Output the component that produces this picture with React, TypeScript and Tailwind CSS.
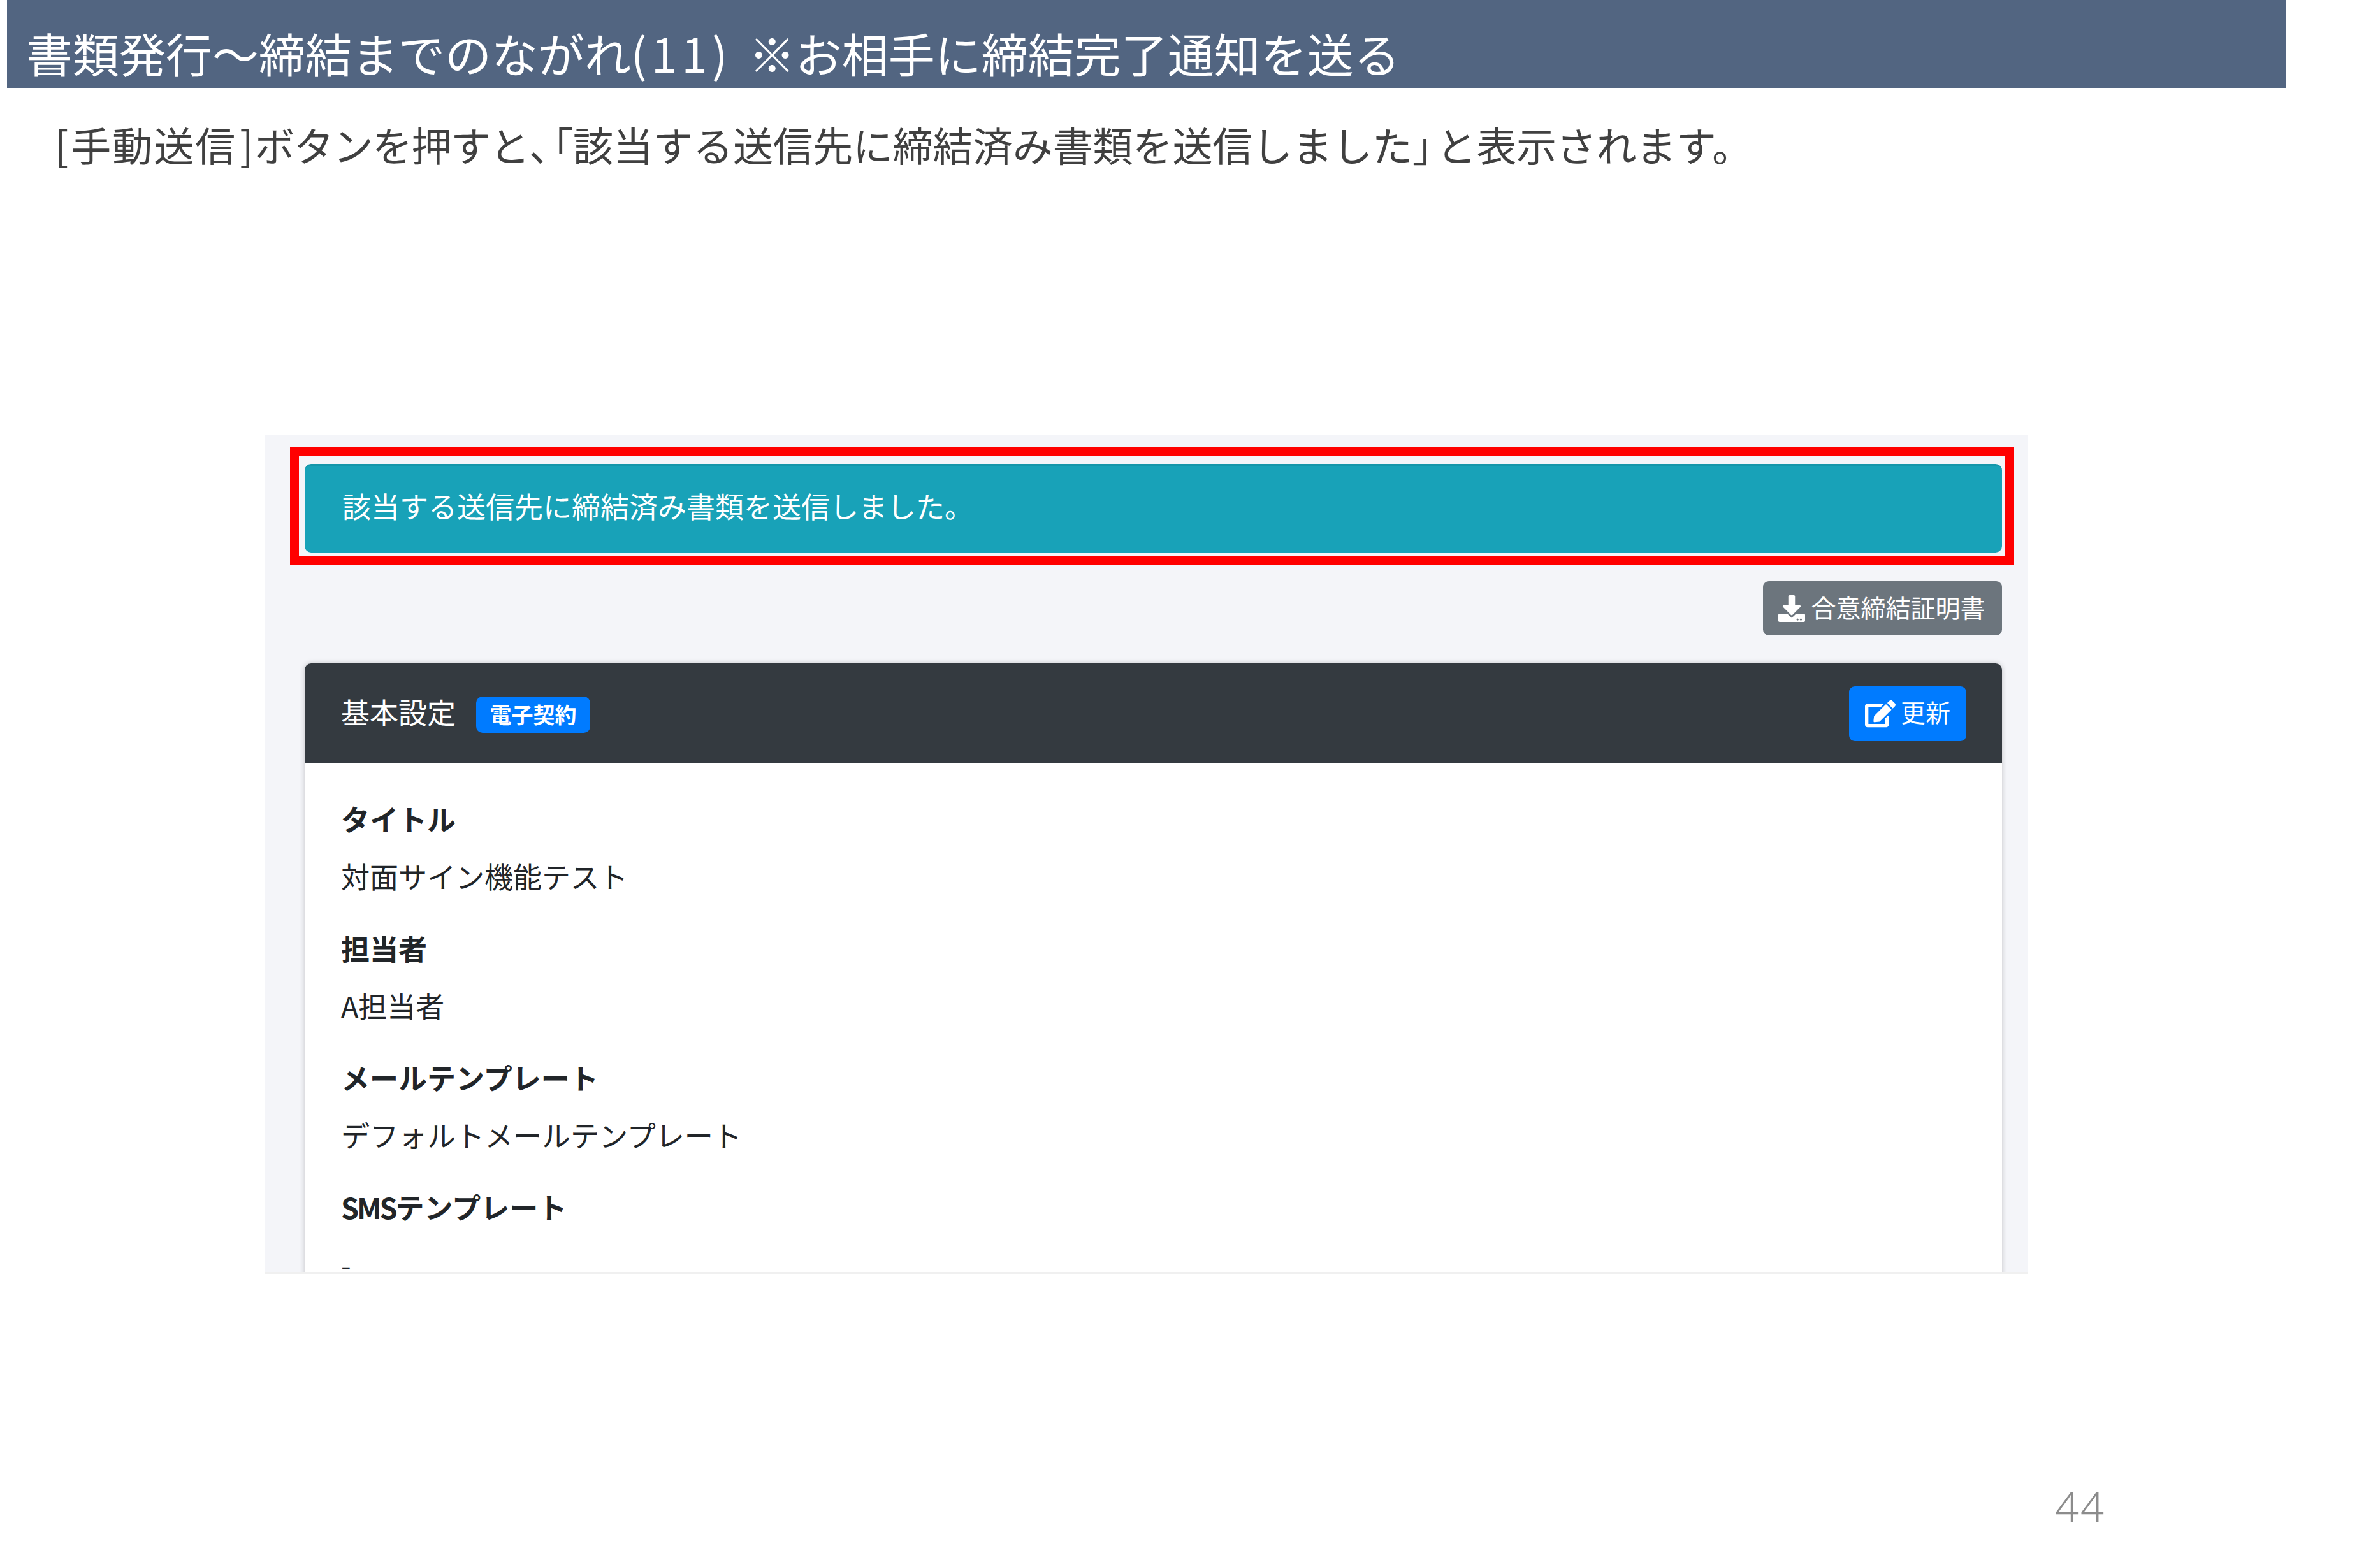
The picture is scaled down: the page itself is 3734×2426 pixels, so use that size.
import { FaDownload, FaEdit } from "react-icons/fa";

const jp = "font-['Noto_Sans_CJK_JP','Noto_Sans',sans-serif]";

function Field({ label, value }: { label: React.ReactNode; value: string }) {
  return (
    <div className="mb-[45px]">
      <div className="mb-[22px] text-[45px] font-bold leading-[68px]">{label}</div>
      <div className="text-[45px] leading-[68px]">{value}</div>
    </div>
  );
}

export default function App() {
  return (
    <div className={`h-[2426px] w-[3734px] overflow-hidden bg-white ${jp}`}>
      {/* Slide title */}
      <div className="ml-[11px] flex h-[138px] w-[3575px] items-end bg-[#526581] pb-[12px] pl-[30px]">
        <h1 className="whitespace-pre text-[73px] font-normal leading-[88px] text-white">
          書類発行～締結までのながれ<span className="pr-[10px] tracking-[7px]">(11)</span> ※お相手に締結完了通知を送る
        </h1>
      </div>
      <p className="ml-[86px] mt-[44px] whitespace-pre text-[63px] font-normal leading-[88px] text-[#404040]">
        <span className="tracking-[4px]">[</span>
        <span className="tracking-[2px]">手動送信</span>
        <span className="ml-[5px] mr-[2px]">]</span>
        <span className="tracking-[-1.5px]">ボタンを押すと</span>
        <span className="tracking-[-0.4em]">、</span>
        <span className="tracking-[-0.3px]">
          「該当する送信先に締結済み書類を送信しました<span className="tracking-[-0.4em]">」</span>と表示されます。
        </span>
      </p>

      {/* Embedded app screenshot */}
      <div className="ml-[415px] mt-[412px] h-[1317px] w-[2767px] overflow-hidden border-b-[3px] border-[#f0f0f0] bg-[#f4f5f9] pl-[40px] pr-[23px] pt-[19px] text-[#212529]">
        <div className="border-[14px] border-[#ff0000] pb-[6px] pl-[9px] pr-[4px] pt-[13px]">
          <div className="flex h-[139px] items-center rounded-[10px] border-t-[3px] border-[#1596aa] bg-[#18a2b8] pb-[10px] pl-[59px] text-[45px] text-white">
            該当する送信先に締結済み書類を送信しました。
          </div>
        </div>

        <div className="mr-[18px] mt-[25px] flex justify-end">
          <button className="flex h-[85px] w-[375px] items-center justify-center gap-[9px] rounded-[9px] bg-[#6c757d] pb-[4px] pr-[2px] text-[39px] text-white">
            <FaDownload className="mt-[4px] h-[42px] w-[42px]" />
            合意締結証明書
          </button>
        </div>

        <div className="ml-[23px] mr-[18px] mt-[44px] rounded-[10px] bg-white shadow-[0_0_8px_rgba(0,0,0,0.2)]">
          <div className="flex h-[157px] items-center justify-between rounded-t-[10px] bg-[#343a40] pl-[57px] pr-[56px] text-white">
            <div className="flex items-center gap-[32px]">
              <span className="mb-[5px] text-[45px]">基本設定</span>
              <span className="mt-[4px] flex h-[57px] w-[179px] items-center justify-center rounded-[10px] bg-[#007bff] pb-[2px] text-[34px] font-bold">
                電子契約
              </span>
            </div>
            <button className="flex h-[86px] w-[184px] items-center justify-center gap-[8px] rounded-[9px] bg-[#007bff] pb-[6px] text-[39px] text-white">
              <FaEdit className="mt-[6px] h-[44px] w-[48px]" />
              更新
            </button>
          </div>
          <div className="px-[57px] pt-[53px]">
            <Field label="タイトル" value="対面サイン機能テスト" />
            <Field label="担当者" value="A担当者" />
            <Field label="メールテンプレート" value="デフォルトメールテンプレート" />
            <Field
              label={
                <>
                  <span className="tracking-[-3px]">SMS</span>テンプレート
                </>
              }
              value="-"
            />
          </div>
        </div>
      </div>

      {/* Page number */}
      <div className="ml-[3224px] mt-[320px] font-['Noto_Sans',sans-serif] text-[65px] font-light leading-[88px] tracking-[3px] text-[#8c8c8c]">
        44
      </div>
    </div>
  );
}
